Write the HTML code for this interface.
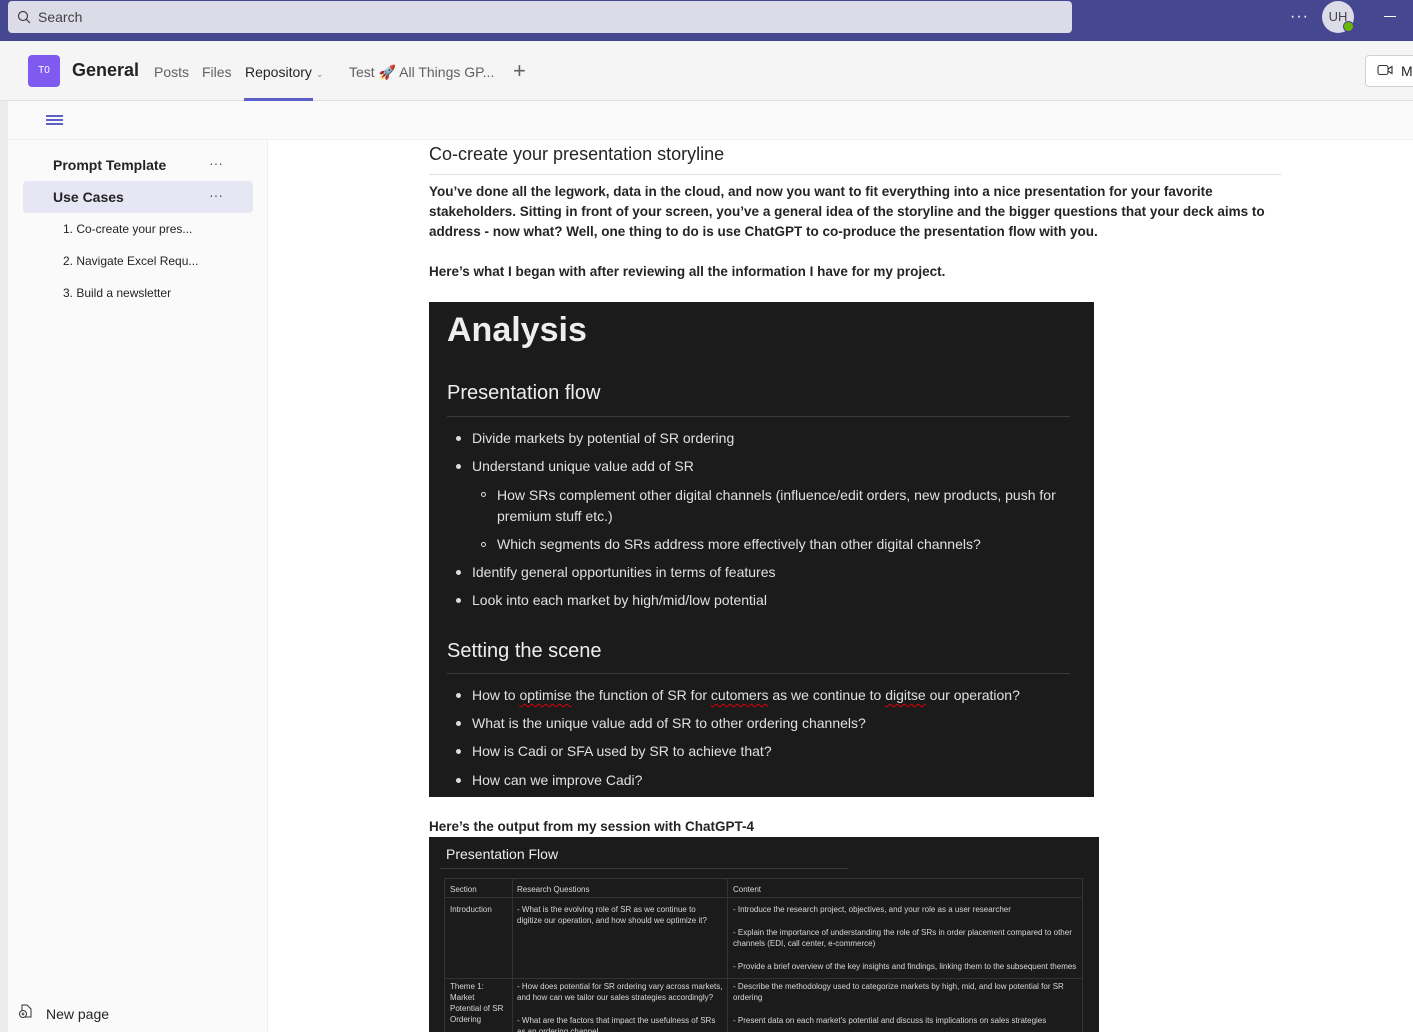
<!DOCTYPE html>
<html><head><meta charset="utf-8"><style>
*{margin:0;padding:0;box-sizing:border-box}
body{width:1413px;height:1032px;overflow:hidden;font-family:"Liberation Sans",sans-serif;background:#fff;position:relative;color:#242424}
.a{position:absolute}
.top{left:0;top:0;width:1413px;height:41px;background:#464791}
.search{left:8px;top:1px;width:1064px;height:32px;background:#dcdbe8;border-radius:4px;color:#424242;font-size:14px;line-height:32px;padding-left:30px}
.hdr{left:0;top:41px;width:1413px;height:60px;background:#f5f5f5;border-bottom:1px solid #e0e0e0}
.tab{top:64px;font-size:14px;color:#616161}
.side{left:8px;top:140px;width:260px;height:892px;background:#fafafa;border-right:1px solid #eee}
.strip{left:0;top:101px;width:8px;height:931px;background:#ececec}
.tool{left:8px;top:101px;width:1405px;height:39px;background:#fafafa;border-bottom:1px solid #f0f0f0}
.dark{background:#1b1b1b;color:#e8e8e8;overflow:hidden}
.li{font-size:14px;color:#e0e0e0}
.dot{position:absolute;width:5px;height:5px;border-radius:50%;background:#ddd}
.circ{position:absolute;width:5px;height:5px;border-radius:50%;border:1px solid #ddd}
.p{font-size:13.5px;font-weight:bold;line-height:20px;color:#242424}
.u{text-decoration:underline wavy #d00;text-underline-offset:3px;text-decoration-thickness:1px}
.t{font-size:8px;color:#d8d8d8;line-height:11px}
</style></head><body>
<div class="a top"></div>
<div class="a search"><svg class="a" style="left:9px;top:9px" width="14" height="14" viewBox="0 0 14 14"><circle cx="6" cy="6" r="4.5" fill="none" stroke="#424242" stroke-width="1.2"/><path d="M9.3 9.3L13 13" stroke="#424242" stroke-width="1.2"/></svg>Search</div>
<div class="a" style="left:1290px;top:8px;color:#fff;font-size:16px;letter-spacing:1px">···</div>
<div class="a" style="left:1322px;top:1px;width:32px;height:32px;border-radius:50%;background:#dcdbe8;color:#444;font-size:13px;line-height:32px;text-align:center">UH</div>
<div class="a" style="left:1343px;top:21px;width:11px;height:11px;border-radius:50%;background:#6bb700;border:1.5px solid #464791"></div>
<div class="a" style="left:1384px;top:16px;width:12px;height:1px;background:#fff"></div>
<div class="a hdr"></div>
<div class="a" style="left:28px;top:55px;width:32px;height:32px;border-radius:4px;background:#7f5af0;color:#fff;font-size:10px;line-height:32px;text-align:center">T0</div>
<div class="a" style="left:72px;top:60px;font-size:18px;font-weight:bold;color:#242424">General</div>
<div class="a tab" style="left:154px">Posts</div>
<div class="a tab" style="left:202px">Files</div>
<div class="a tab" style="left:245px;color:#242424">Repository <span style="font-size:9px;color:#888">&#8964;</span></div>
<div class="a" style="left:244px;top:98px;width:69px;height:3px;background:#5b5fc7"></div>
<div class="a tab" style="left:349px">Test <span style="font-size:14px">🚀</span> All Things GP...</div>
<div class="a" style="left:513px;top:58px;font-size:22px;color:#616161;font-weight:300">+</div>
<div class="a" style="left:1365px;top:55px;width:60px;height:32px;border:1px solid #d1d1d1;border-radius:4px;background:#fff"></div>
<svg class="a" style="left:1377px;top:64px" width="16" height="12" viewBox="0 0 16 12"><rect x="1" y="1.5" width="10" height="9" rx="2" fill="none" stroke="#333" stroke-width="1.1"/><path d="M11 5L15 2.5V9.5L11 7" fill="none" stroke="#333" stroke-width="1.1"/></svg>
<div class="a" style="left:1401px;top:63px;font-size:14px;color:#242424">M</div>
<div class="a strip"></div>
<div class="a tool"></div>
<div class="a" style="left:46px;top:115px;width:17px;height:2px;background:#5b5fc7;box-shadow:0 4px 0 #5b5fc7,0 8px 0 #5b5fc7"></div>
<div class="a side"></div>
<div class="a" style="left:53px;top:157px;font-size:14px;font-weight:bold">Prompt Template</div>
<div class="a" style="left:209px;top:155px;font-size:14px;color:#555">···</div>
<div class="a" style="left:23px;top:181px;width:230px;height:32px;background:#e6e6f4;border-radius:4px"></div>
<div class="a" style="left:53px;top:189px;font-size:14px;font-weight:bold">Use Cases</div>
<div class="a" style="left:209px;top:187px;font-size:14px;color:#555">···</div>
<div class="a" style="left:63px;top:222px;font-size:12px">1. Co-create your pres...</div>
<div class="a" style="left:63px;top:254px;font-size:12px">2. Navigate Excel Requ...</div>
<div class="a" style="left:63px;top:286px;font-size:12px">3. Build a newsletter</div>
<svg class="a" style="left:18px;top:1003px" width="16" height="16" viewBox="0 0 16 16"><path d="M4 2h5l4 4v8H4z" fill="none" stroke="#333"/><circle cx="5" cy="11" r="3.5" fill="#fafafa" stroke="#333"/><path d="M5 9.5v3M3.5 11h3" stroke="#333"/></svg>
<div class="a" style="left:46px;top:1006px;font-size:14px">New page</div>

<div class="a" style="left:429px;top:144px;font-size:18px;color:#242424">Co-create your presentation storyline</div>
<div class="a" style="left:429px;top:174px;width:852px;height:1px;background:#e0e0e0"></div>
<div class="a p" style="left:429px;top:182px;width:870px">You’ve done all the legwork, data in the cloud, and now you want to fit everything into a nice presentation for your favorite stakeholders. Sitting in front of your screen, you’ve a general idea of the storyline and the bigger questions that your deck aims to address - now what? Well, one thing to do is use ChatGPT to co-produce the presentation flow with you.</div>
<div class="a p" style="left:429px;top:262px">Here’s what I began with after reviewing all the information I have for my project.</div>

<div class="a dark" style="left:429px;top:302px;width:665px;height:495px">
 <div class="a" style="left:18px;top:9px;font-size:34px;font-weight:bold;color:#eee">Analysis</div>
 <div class="a" style="left:18px;top:80px;font-size:20px;color:#eee">Presentation flow</div>
 <div class="a" style="left:18px;top:114px;width:623px;height:1px;background:#3a3a3a"></div>
 <span class="dot" style="left:27px;top:134px"></span><div class="a li" style="left:43px;top:128px">Divide markets by potential of SR ordering</div>
 <span class="dot" style="left:27px;top:162px"></span><div class="a li" style="left:43px;top:156px">Understand unique value add of SR</div>
 <span class="circ" style="left:52px;top:190px"></span><div class="a li" style="left:68px;top:183px;width:580px;line-height:21px">How SRs complement other digital channels (influence/edit orders, new products, push for premium stuff etc.)</div>
 <span class="circ" style="left:52px;top:240px"></span><div class="a li" style="left:68px;top:234px">Which segments do SRs address more effectively than other digital channels?</div>
 <span class="dot" style="left:27px;top:268px"></span><div class="a li" style="left:43px;top:262px">Identify general opportunities in terms of features</div>
 <span class="dot" style="left:27px;top:296px"></span><div class="a li" style="left:43px;top:290px">Look into each market by high/mid/low potential</div>
 <div class="a" style="left:18px;top:338px;font-size:20px;color:#eee">Setting the scene</div>
 <div class="a" style="left:18px;top:371px;width:623px;height:1px;background:#3a3a3a"></div>
 <span class="dot" style="left:27px;top:391px"></span><div class="a li" style="left:43px;top:385px">How to <span class="u">optimise</span> the function of SR for <span class="u">cutomers</span> as we continue to <span class="u">digitse</span> our operation?</div>
 <span class="dot" style="left:27px;top:419px"></span><div class="a li" style="left:43px;top:413px">What is the unique value add of SR to other ordering channels?</div>
 <span class="dot" style="left:27px;top:447px"></span><div class="a li" style="left:43px;top:441px">How is Cadi or SFA used by SR to achieve that?</div>
 <span class="dot" style="left:27px;top:476px"></span><div class="a li" style="left:43px;top:470px">How can we improve Cadi?</div>
</div>

<div class="a p" style="left:429px;top:817px">Here’s the output from my session with ChatGPT-4</div>
<div class="a dark" style="left:429px;top:837px;width:670px;height:195px">
 <div class="a" style="left:17px;top:9px;font-size:14px;color:#eee">Presentation Flow</div>
 <div class="a" style="left:11px;top:31px;width:408px;height:1px;background:#3a3a3a"></div>
 <div class="a" style="left:15px;top:41px;width:639px;height:170px;border:1px solid #333"></div>
 <div class="a" style="left:15px;top:60px;width:639px;height:1px;background:#333"></div>
 <div class="a" style="left:15px;top:141px;width:639px;height:1px;background:#333"></div>
 <div class="a" style="left:83px;top:41px;width:1px;height:160px;background:#333"></div>
 <div class="a" style="left:298px;top:41px;width:1px;height:160px;background:#333"></div>
 <div class="a t" style="left:21px;top:47px">Section</div>
 <div class="a t" style="left:88px;top:47px">Research Questions</div>
 <div class="a t" style="left:304px;top:47px">Content</div>
 <div class="a t" style="left:21px;top:67px">Introduction</div>
 <div class="a t" style="left:88px;top:67px;width:205px">- What is the evolving role of SR as we continue to digitize our operation, and how should we optimize it?</div>
 <div class="a t" style="left:304px;top:67px">- Introduce the research project, objectives, and your role as a user researcher</div>
 <div class="a t" style="left:304px;top:90px;width:345px">- Explain the importance of understanding the role of SRs in order placement compared to other channels (EDI, call center, e-commerce)</div>
 <div class="a t" style="left:304px;top:124px">- Provide a brief overview of the key insights and findings, linking them to the subsequent themes</div>
 <div class="a t" style="left:21px;top:144px;width:55px">Theme 1: Market Potential of SR Ordering</div>
 <div class="a t" style="left:88px;top:144px;width:210px">- How does potential for SR ordering vary across markets, and how can we tailor our sales strategies accordingly?</div>
 <div class="a t" style="left:88px;top:178px;width:205px">- What are the factors that impact the usefulness of SRs as an ordering channel</div>
 <div class="a t" style="left:304px;top:144px;width:345px">- Describe the methodology used to categorize markets by high, mid, and low potential for SR ordering</div>
 <div class="a t" style="left:304px;top:178px">- Present data on each market's potential and discuss its implications on sales strategies</div>
</div>
</body></html>
